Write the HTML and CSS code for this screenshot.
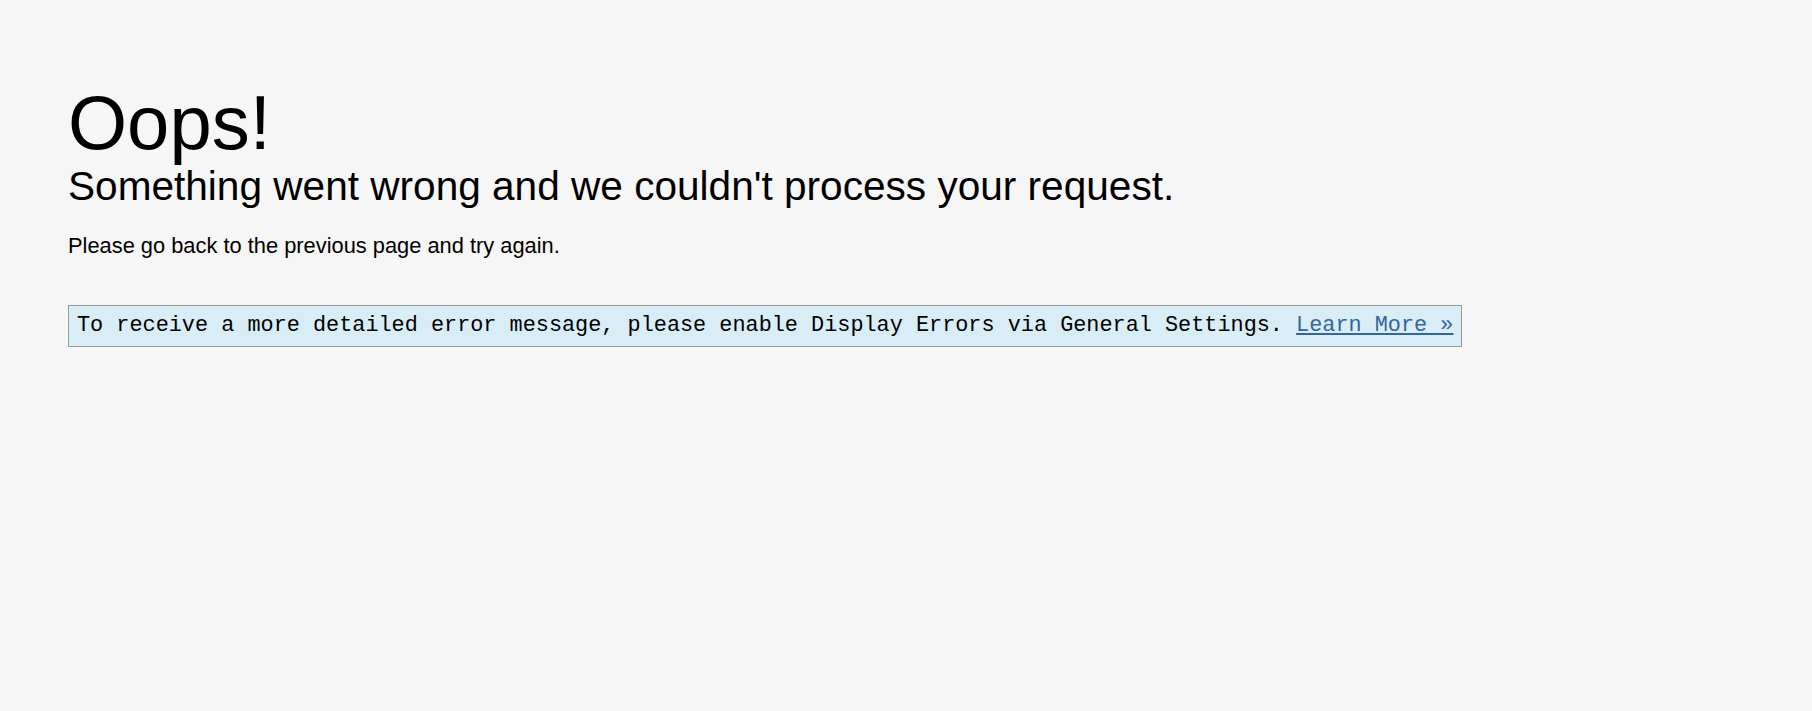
FILE: index.html
```html
<!DOCTYPE html>
<html>
<head>
<meta charset="utf-8">
<title>Oops! Something went wrong</title>
<link rel="stylesheet" href="styles.css">
</head>
<body>
<div class="error-container">
  <h1 class="title">Oops!</h1>
  <h2 class="subtitle">Something went wrong and we couldn't process your request.</h2>
  <p class="lead">Please go back to the previous page and try again.</p>
  <p class="debug">To receive a more detailed error message, please enable Display Errors via General Settings. <a href="#">Learn More &raquo;</a></p>
</div>
</body>
</html>
```

FILE: styles.css
```css
html, body {
  margin: 0;
  padding: 0;
  background: #f6f6f6;
}
body {
  font-family: "Liberation Sans", Arial, sans-serif;
  color: #000;
}
.error-container {
  padding: 85px 68px;
}
.title {
  margin: 0;
  font-size: 76px;
  font-weight: 400;
  line-height: 1;
}
.subtitle {
  margin: 3px 0 0;
  font-size: 40.6px;
  font-weight: 400;
  line-height: 1.1;
}
.lead {
  margin: 23px 0 0;
  font-size: 21.85px;
  line-height: 1.3;
}
.debug {
  display: inline-block;
  margin: 45px 0 0;
  padding: 7px 8px 8px;
  border: 1px solid #999;
  background: #d9edf7;
  font-family: "Liberation Mono", "Courier New", monospace;
  font-size: 21.85px;
  line-height: 1.15;
  color: #000;
}
.debug a {
  color: #336699;
}
```
